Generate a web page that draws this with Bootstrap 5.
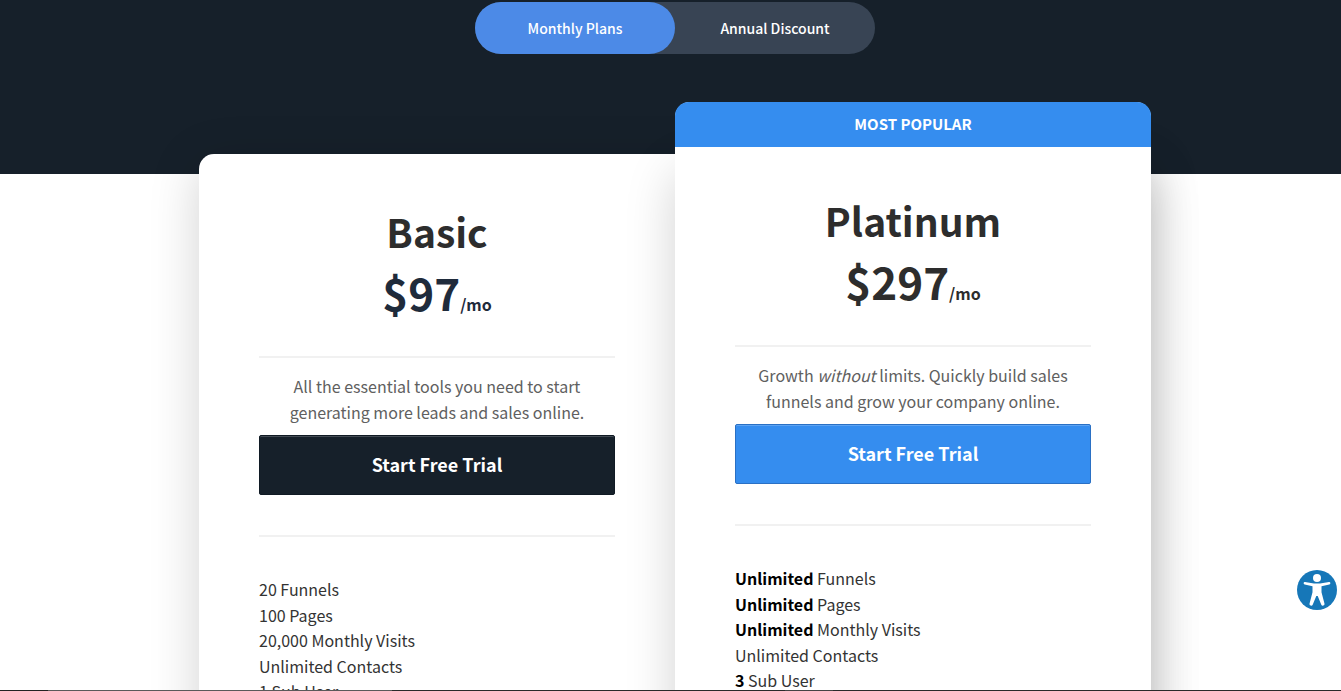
<!DOCTYPE html>
<html lang="en">
<head>
<meta charset="utf-8">
<meta name="viewport" content="width=device-width, initial-scale=1">
<title>Pricing plans</title>
<link rel="stylesheet" href="https://cdn.jsdelivr.net/npm/bootstrap@5.3.0/dist/css/bootstrap.min.css">
<style>
body { font-family: "Noto Sans CJK SC", "Open Sans", sans-serif; color: #2d2d2d; background: #fff; }
.pricing { --navy: #16202a; --azure: #358def; padding: 2px 0 0 9px; background: linear-gradient(var(--navy) 174px, #fff 174px); }
.plan-switch { width: 400px; height: 52px; background: #384454; border-radius: 26px; }
.plan-switch .btn { border: 0; border-radius: 26px; color: #fff; font-size: 14px; line-height: 20px; font-weight: 500; }
.plan-switch .btn.active { background: #4c8ae7; color: #fff; }
.plans { position: relative; max-width: 952px; margin-top: 48px; }
.plans::before { content: ""; position: absolute; inset: 52px 0 0; padding: 0; width: auto; max-width: none; border-radius: 15px 0 0 0; box-shadow: 0 10px 50px rgba(0,0,0,.18); }
.plan-basic, .plan-top { position: relative; background: #fff; }
.plan-basic { margin-top: 52px; border-radius: 15px 0 0 0; }
.plan-top { border-radius: 15px 15px 0 0; box-shadow: 0 70px 50px rgba(0,0,0,.18); }
.popular { background: var(--azure); color: #fff; font-size: 15px; line-height: 44px; padding-bottom: 1px; font-weight: 700; border-radius: 14px 14px 0 0; }
.plan-body { padding: 47px 60px 40px; }
.plan-top .plan-body { padding-top: 43px; }
.plan-name { font-size: 39px; line-height: 60px; font-weight: 700; margin: 0; }
.plan-price { font-size: 44px; line-height: 62px; font-weight: 700; margin: 0 0 21px; }
.plan-price small { font-size: 16px; font-weight: 700; }
.plan-basic .plan-price { color: #1f2b3b; }
.rule { height: 2px; background: #f1f1f1; border: 0; opacity: 1; margin: 0; }
.blurb { font-size: 16px; line-height: 26px; color: #606060; font-weight: 400; margin: 15px 0 10px; }
.trial { height: 60px; border-radius: 2px; font-size: 18px; font-weight: 700; color: #fff; padding: 0 0 2px; border: 1px solid; box-shadow: inset 0 1px 0 rgba(255,255,255,.2); margin-bottom: 40px; }
.trial-navy { background: var(--navy); border-color: #101a24; }
.trial-azure { background: var(--azure); border-color: #2a70c4; }
.features { margin: 40px 0 0; font-size: 16px; line-height: 1.6; font-weight: 400; color: #333; }
.features b { color: #000; font-weight: 700; }
.a11y { position: fixed; right: 4px; bottom: 81px; width: 40px; height: 40px; }
.edge { height: 1px; background: linear-gradient(90deg, #222 48px, #5a5a5a 48px 392px, #2a2a2a 392px 785px, #444 785px 833px, #2a2a2a 833px); }
</style>
</head>
<body class="vh-100 overflow-hidden">
<main class="pricing">
  <div class="plan-switch d-flex mx-auto" role="group" aria-label="Billing period">
    <button type="button" class="btn active flex-fill w-50">Monthly Plans</button>
    <button type="button" class="btn flex-fill w-50">Annual Discount</button>
  </div>
  <div class="plans row g-0 mx-auto">
    <section class="col-6 d-flex">
      <div class="plan-basic flex-fill">
        <div class="plan-body">
          <div class="text-center">
            <h2 class="plan-name">Basic</h2>
            <p class="plan-price">$97<small>/mo</small></p>
          </div>
          <hr class="rule">
          <p class="blurb text-center">All the essential tools you need to start generating more leads and sales online.</p>
          <button type="button" class="btn trial trial-navy w-100">Start Free Trial</button>
          <hr class="rule">
          <ul class="features list-unstyled">
            <li>20 Funnels</li>
            <li>100 Pages</li>
            <li>20,000 Monthly Visits</li>
            <li>Unlimited Contacts</li>
            <li>1 Sub User</li>
          </ul>
        </div>
      </div>
    </section>
    <section class="col-6 d-flex">
      <div class="plan-top flex-fill">
        <div class="popular text-center">MOST POPULAR</div>
        <div class="plan-body">
          <div class="text-center">
            <h2 class="plan-name">Platinum</h2>
            <p class="plan-price">$297<small>/mo</small></p>
          </div>
          <hr class="rule">
          <p class="blurb text-center">Growth <em>without</em> limits. Quickly build sales funnels and grow your company online.</p>
          <button type="button" class="btn trial trial-azure w-100">Start Free Trial</button>
          <hr class="rule">
          <ul class="features list-unstyled">
            <li><b>Unlimited</b> Funnels</li>
            <li><b>Unlimited</b> Pages</li>
            <li><b>Unlimited</b> Monthly Visits</li>
            <li>Unlimited Contacts</li>
            <li><b>3</b> Sub User</li>
          </ul>
        </div>
      </div>
    </section>
  </div>
</main>
<button type="button" class="a11y btn p-0 border-0 rounded-circle" aria-label="Accessibility options">
  <svg class="d-block" width="40" height="40" viewBox="0 0 40 40" aria-hidden="true">
    <circle cx="20" cy="20" r="20" fill="#1677b8"/>
    <circle cx="20" cy="8" r="4" fill="#fff"/>
    <path fill="#fff" d="M8 12 17 13.400h6l9-1.400a1.200 1.200 0 0 1 .3 2.400L24.500 16.200v6l3 11.500a1.700 1.700 0 0 1-3.200 1L20.700 26h-1.400l-3.600 8.700a1.700 1.700 0 0 1-3.200-1l3-11.500v-6L7.700 14.400A1.200 1.200 0 0 1 8 12Z"/>
  </svg>
</button>
<div class="edge fixed-bottom"></div>
<script src="https://cdn.jsdelivr.net/npm/bootstrap@5.3.0/dist/js/bootstrap.bundle.min.js"></script>
</body>
</html>
